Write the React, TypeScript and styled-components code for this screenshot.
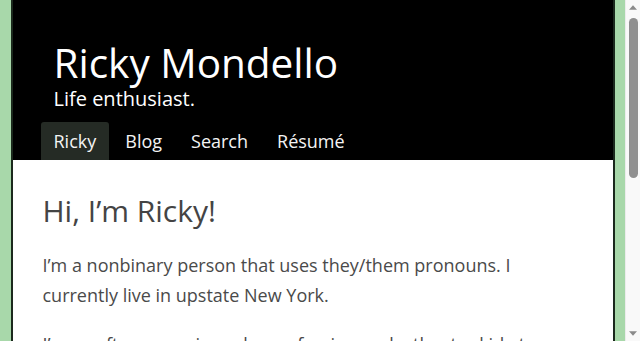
import React from "react";
import styled, {createGlobalStyle} from "styled-components";

const GlobalStyle = createGlobalStyle`
  html, body {
    margin: 0;
    padding: 0;
  }
  body {
    background: #a8d8aa;
    font-family: "Open Sans", "Liberation Sans", sans-serif;
    padding-right: 15px;
  }
`

type NavLink = {
    label: string
    active?: boolean
}

const links: NavLink[] = [
    {label: "Ricky", active: true},
    {label: "Blog"},
    {label: "Search"},
    {label: "Résumé"},
]

const paragraphs = [
    "I’m a nonbinary person that uses they/them pronouns. I currently live in upstate New York.",
    "I’m a software engineer by profession and a theatre kid at heart. When I’m not writing code, I’m usually singing, cooking, or out on a long walk with a podcast.",
    "This site is where I write about the things I care about: software, accessibility, queer life, and whatever else is on my mind that week.",
    "Thanks for stopping by. Say hello any time.",
]

export default function App() {
    return (
        <>
            <GlobalStyle/>
            <Page>
                <Header>
                    <Brand>
                        <SiteTitle>Ricky Mondello</SiteTitle>
                        <Tagline>Life enthusiast.</Tagline>
                    </Brand>
                    <Nav>
                        {links.map(link => (
                            <NavItem key={link.label} href="#" $active={link.active}>
                                {link.label}
                            </NavItem>
                        ))}
                    </Nav>
                </Header>
                <Main>
                    <Heading>Hi, I’m Ricky!</Heading>
                    {paragraphs.map((text, i) => (
                        <Paragraph key={i}>{text}</Paragraph>
                    ))}
                </Main>
            </Page>
            <Scrollbar aria-hidden>
                <Arrow viewBox="0 0 9 5"><path d="M0 5 L4.5 0 L9 5 Z"/></Arrow>
                <Track>
                    <Thumb/>
                </Track>
                <Arrow viewBox="0 0 9 5"><path d="M0 0 L4.5 5 L9 0 Z"/></Arrow>
            </Scrollbar>
        </>
    )
}

const Page = styled.div`
  max-width: 600px;
  margin: 0 auto;
  border-left: 2px solid #1b291d;
  border-right: 2px solid #1b291d;
  background: #ffffff;
`

const Header = styled.header`
  background: #000000;
  color: #ffffff;
  padding: 41px 28px 0;
`

const Brand = styled.div`
  padding-left: 13px;
  margin-bottom: 11px;
`

const SiteTitle = styled.h1`
  margin: 0;
  font-size: 40.5px;
  line-height: 44px;
  font-weight: 400;
`

const Tagline = styled.div`
  margin-top: 2px;
  font-size: 20px;
  line-height: 24px;
`

const Nav = styled.nav`
  display: flex;
  gap: 3px;
`

const NavItem = styled.a<{ $active?: boolean }>`
  display: block;
  padding: 7px 13px;
  font-size: 18px;
  line-height: 24px;
  color: #f4f4f4;
  text-decoration: none;
  border-radius: 3px 3px 0 0;
  background: ${p => p.$active ? "#252b25" : "transparent"};
`

const Main = styled.main`
  padding: 33px 40px 40px 30px;
  color: #4a4a4a;
`

const Heading = styled.h2`
  margin: 0 0 21px;
  font-size: 30px;
  line-height: 36px;
  font-weight: 400;
  color: #444444;
`

const Paragraph = styled.p`
  margin: 0 0 19px;
  font-size: 18px;
  line-height: 30px;
`

const Scrollbar = styled.div`
  position: fixed;
  top: 0;
  right: 0;
  bottom: 0;
  width: 15px;
  display: flex;
  flex-direction: column;
  align-items: center;
  background: #f9f9f9;
  border-left: 1px solid #ececec;
  box-sizing: border-box;
`

const Arrow = styled.svg`
  width: 8px;
  height: 5px;
  margin: 5px 0;
  fill: #8a8a8a;
  flex: none;
`

const Track = styled.div`
  flex: 1;
  width: 100%;
  display: flex;
  justify-content: center;
  padding-top: 3px;
`

const Thumb = styled.div`
  width: 9px;
  height: 160px;
  border-radius: 5px;
  background: #8f8f8f;
`
